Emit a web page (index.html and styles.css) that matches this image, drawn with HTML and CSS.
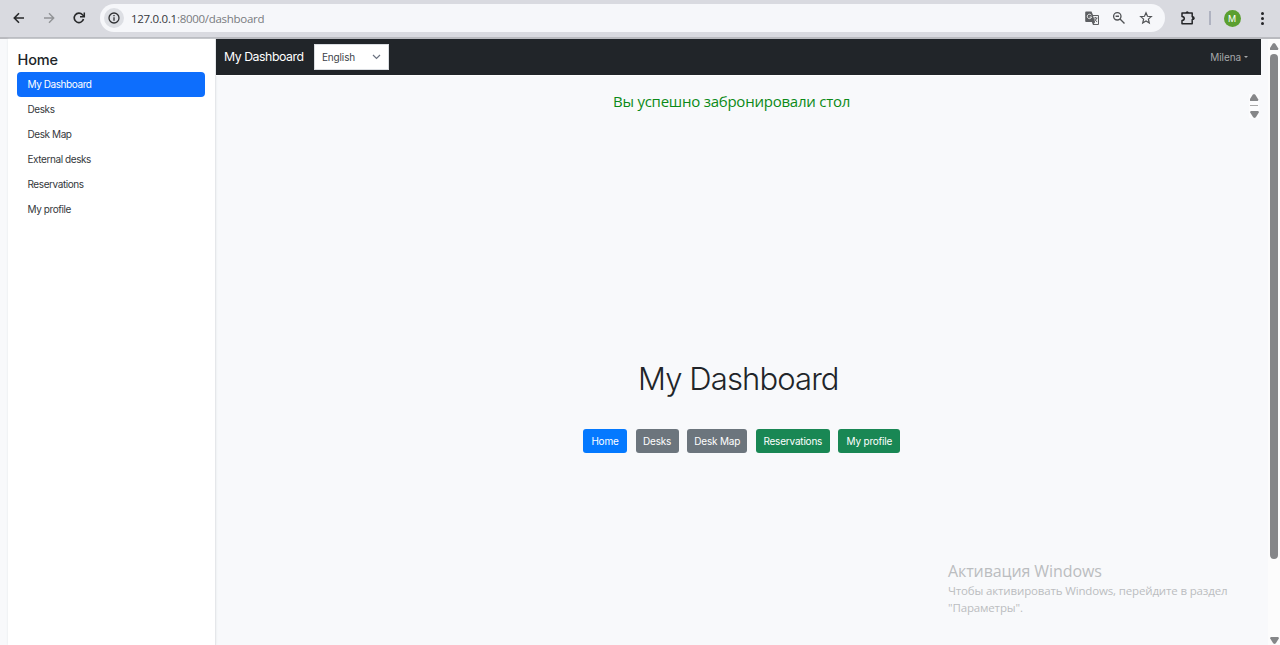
FILE: index.html
```html
<!DOCTYPE html>
<html lang="en">
<head>
<meta charset="utf-8">
<title>My Dashboard</title>
<link rel="stylesheet" href="styles.css">
</head>
<body>
<header class="browser">
  <div class="nav-icons">
    <svg width="14" height="14" viewBox="0 0 14 14"><path d="M12 7H2.5M7 2.3L2.3 7L7 11.7" fill="none" stroke="#27282a" stroke-width="1.6"/></svg>
    <svg width="14" height="14" viewBox="0 0 14 14"><path d="M2 7H11.5M7 2.3L11.7 7L7 11.7" fill="none" stroke="#919396" stroke-width="1.4"/></svg>
    <svg width="14" height="14" viewBox="0 0 14 14"><path d="M11.5 8A4.7 4.7 0 1 1 10.5 3.8L12 5.2" fill="none" stroke="#27282a" stroke-width="1.6"/><path d="M12.3 1.4V5.7H8" fill="none" stroke="#27282a" stroke-width="1.5"/></svg>
  </div>
  <div class="address">
    <span class="info"><svg width="14" height="14" viewBox="0 0 14 14"><circle cx="7" cy="7" r="5" fill="none" stroke="#303134" stroke-width="1.3"/><path d="M7 6.3V9.8M7 4V5.3" stroke="#303134" stroke-width="1.3"/></svg></span>
    <span class="url">127.0.0.1<span class="path">:8000/dashboard</span></span>
    <div class="address-icons">
      <svg width="15" height="15" viewBox="0 0 15 15"><path d="M1 .5H6.5L8 4H13Q14 4 14 5V13Q14 14 13 14H8L6.8 11H1Q.2 11 .2 10V1.4Q.2.5 1 .5Z" fill="#5d5f62"/><path d="M8.1 5H13V13H8.8L10 11.2Z" fill="#f2f3f5"/><path d="M6.3 4.2A2.2 2.2 0 1 0 6.6 6H4.6" fill="none" stroke="#eee" stroke-width="1"/><path d="M8.5 7H12.6M10.5 6V7M11.8 7Q11 9.3 9 10.6M9.5 8L12 11" fill="none" stroke="#5d5f62" stroke-width=".9"/></svg>
      <svg width="14" height="14" viewBox="0 0 14 14"><circle cx="5.3" cy="5.3" r="3.7" fill="none" stroke="#505255" stroke-width="1.3"/><path d="M8 8L12.5 12.5M3.6 5.3H7" stroke="#505255" stroke-width="1.4"/></svg>
      <svg width="14" height="14" viewBox="0 0 14 14"><path d="M7 1.8L8.5 5.3L12.3 5.6L9.4 8.1L10.3 11.9L7 9.9L3.7 11.9L4.6 8.1L1.7 5.6L5.5 5.3Z" fill="none" stroke="#505255" stroke-width="1.2"/></svg>
    </div>
  </div>
  <svg class="puzzle" width="16" height="16" viewBox="0 0 16 16"><path d="M2 3H12.2V6.8Q14 6.8 14 8.2T12.2 9.6V13.8H2V10.4Q4.3 10.2 4.3 8.4T2 6.4Z" fill="none" stroke="#242528" stroke-width="1.5" stroke-linejoin="round"/><path d="M5.6 3Q5.7 1.2 7.2 1.2T8.8 3ZM12.2 6.6Q14.4 6.7 14.4 8.2T12.2 9.8Z" fill="#242528"/></svg>
  <span class="divider"></span>
  <span class="avatar">M</span>
  <span class="dots"><i></i><i></i><i></i></span>
</header>
<div class="page">
  <aside class="sidebar">
    <h2>Home</h2>
    <nav>
      <a class="active">My Dashboard</a>
      <a>Desks</a>
      <a>Desk Map</a>
      <a>External desks</a>
      <a>Reservations</a>
      <a>My profile</a>
    </nav>
  </aside>
  <main>
    <div class="navbar">
      <span class="brand">My Dashboard</span>
      <span class="select">English<svg width="9" height="6" viewBox="0 0 9 6"><path d="M1 1L4.5 4.5L8 1" fill="none" stroke="#6b7280" stroke-width="1.2"/></svg></span>
      <span class="user">Milena</span>
    </div>
    <div class="notice">
      <p>Вы успешно забронировали стол</p>
      <div class="mini-scroll"><b class="up"></b><hr><b class="down"></b></div>
    </div>
    <section>
      <h1>My Dashboard</h1>
      <div class="buttons">
        <a class="blue">Home</a><a class="gray">Desks</a><a class="gray map">Desk Map</a><a class="green">Reservations</a><a class="green profile">My profile</a>
      </div>
    </section>
  </main>
  <div class="scrollbar"><b class="up"></b><span class="thumb"></span><b class="down"></b></div>
</div>
<div class="activation">
  <div class="activation-title">Активация Windows</div>
  <div class="line">Чтобы активировать Windows, перейдите в раздел</div>
  <div class="line second">"Параметры".</div>
</div>
</body>
</html>
```
FILE: styles.css
```css
* { box-sizing: border-box; }
body { margin: 0; width: 1280px; height: 645px; overflow: hidden; background: #f8f9fb; font-family: Inter, sans-serif; color: #212529; font-size: 10px; }
svg { display: block; flex: none; }
.browser { height: 39px; background: #d9dae0; border-bottom: 2px solid #b9babf; display: flex; align-items: center; padding: 0 16px 1px 0; }
.nav-icons { width: 100px; padding-left: 11.5px; display: flex; gap: 16px; }
.address { width: 1065px; height: 28px; border-radius: 14px; background: #f6f7fa; display: flex; align-items: center; padding: 0 12.5px 0 4px; }
.info { width: 20px; height: 20px; border-radius: 50%; background: #dddfe4; display: flex; align-items: center; justify-content: center; }
.url { margin-left: 7px; font: 11.5px "Open Sans", sans-serif; letter-spacing: -.29px; color: #34363a; white-space: nowrap; }
.path { color: #797b80; }
.address-icons { display: flex; gap: 12.5px; margin-left: auto; }
.puzzle { margin-left: 15px; }
.divider { width: 1.5px; height: 14px; background: #afb2c0; margin-left: 13px; }
.avatar { width: 17px; height: 17px; border-radius: 50%; background: #5b9f30; color: #fff; font-size: 9px; display: flex; align-items: center; justify-content: center; margin-left: 13px; }
.dots { display: grid; gap: 2px; margin-left: 20px; }
.dots i { width: 3px; height: 3px; border-radius: 50%; background: #242528; }
.page { height: 606px; display: flex; padding-left: 8px; }
.sidebar { width: 208px; background: #fff; border-right: 1px solid #e5e7ea; box-shadow: 0 0 2px #e4e6ea; padding: 12px 10px 0 9px; }
.sidebar h2 { margin: 0; height: 21px; font-size: 14.5px; line-height: 18px; font-weight: 500; letter-spacing: -.15px; padding-left: .5px; }
.sidebar nav { display: grid; gap: .1px; }
.sidebar a { height: 25px; line-height: 25px; padding-left: 10.5px; border-radius: 4px; letter-spacing: -.42px; }
.sidebar a:not(.active) { color: #34383c; }
.sidebar .active { color: #fff; background: #0d6efd; }
main { width: 1045px; display: flex; flex-direction: column; }
.navbar { height: 36px; background: #212529; color: #fff; display: flex; align-items: center; padding: 0 13px 1px 8px; }
.brand { width: 90px; font-size: 12.3px; letter-spacing: -.45px; white-space: nowrap; }
.select { width: 75px; height: 26px; border: 1px solid #dadde1; background: #fff; color: #3d4248; display: flex; align-items: center; justify-content: space-between; padding: 0 7px; letter-spacing: -.15px; }
.user { color: #a6a8a9; margin-left: auto; display: flex; align-items: center; gap: 3px; letter-spacing: -.1px; }
.user::after { content: ""; border: 2.5px solid transparent; border-top-color: #a6a8a9; border-bottom: 0; }
.notice { height: 54px; display: flex; align-items: center; border-top: 1px solid #fff; }
.notice p { margin: 0 0 4px 397px; color: #0b8a17; font: 15px "Open Sans", sans-serif; letter-spacing: -.24px; white-space: nowrap; }
.mini-scroll { margin: 7px 2px 0 auto; width: 10px; display: grid; justify-items: center; background: #fcfcfd; }
.mini-scroll hr { width: 8px; border: 0; border-top: 1px solid #a9a9a9; margin: 4px 0 5px; }
.up, .down { width: 9px; height: 7px; background: #858688; clip-path: polygon(50% 0, 65% 12%, 100% 82%, 92% 100%, 8% 100%, 0 82%, 35% 12%); }
.down { transform: rotate(180deg); }
section { padding-top: 230px; }
h1 { font-size: 31px; line-height: 40px; font-weight: 300; letter-spacing: -.88px; margin: 0 0 30px 422px; white-space: nowrap; }
.buttons { display: flex; gap: 8.6px; margin-left: 367px; }
.buttons a { width: 44px; height: 24px; border-radius: 3px; color: #fff; line-height: 24px; text-align: center; white-space: nowrap; letter-spacing: -.2px; }
.buttons .blue { background: #0479ff; }
.buttons .gray { width: 43px; background: #6c757d; }
.buttons .map { width: 60px; }
.buttons .green { width: 74px; background: #198754; }
.buttons .profile { width: 62px; }
.scrollbar { width: 12px; margin-left: 7px; background: #fcfcfc; display: flex; flex-direction: column; align-items: center; padding: 4px 0 1px; }
.thumb { width: 8px; height: 505px; border-radius: 4px; background: #858688; margin-top: 4px; }
.scrollbar .down { margin-top: auto; }
.activation { position: absolute; left: 948px; top: 560px; color: #bbbdc0; font-family: "Open Sans", sans-serif; white-space: nowrap; }
.activation-title { font-size: 16px; line-height: 22px; letter-spacing: -.1px; }
.line { font-size: 11.5px; line-height: 17px; letter-spacing: -.15px; }
```
